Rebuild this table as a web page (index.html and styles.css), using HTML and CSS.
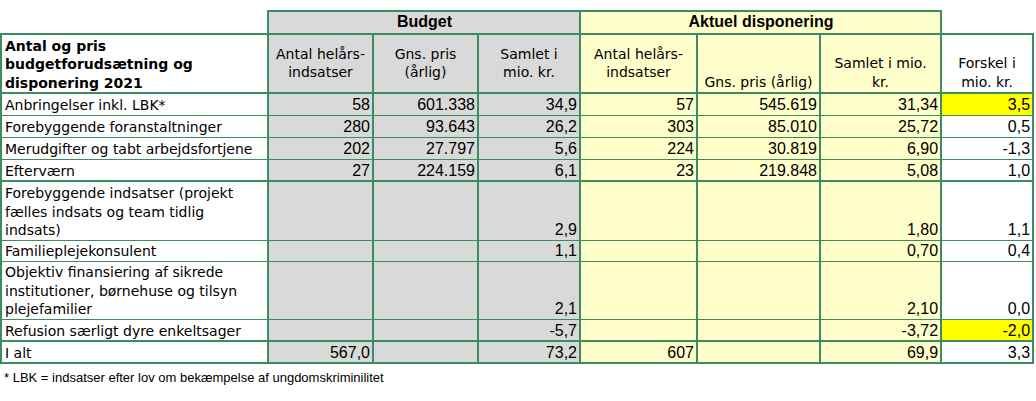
FILE: index.html
```html
<!DOCTYPE html>
<html lang="da">
<head>
<meta charset="utf-8">
<title>Antal og pris budgetforudsætning og disponering 2021</title>
<link rel="stylesheet" href="styles.css">
</head>
<body>
<table class="sheet">
  <colgroup>
    <col class="w-label">
    <col class="w-b1"><col class="w-b2"><col class="w-b3">
    <col class="w-a1"><col class="w-a2"><col class="w-a3">
    <col class="w-diff">
  </colgroup>
  <thead>
    <tr class="r-group">
      <th class="blank"></th>
      <th colspan="3" class="grp gray">Budget</th>
      <th colspan="3" class="grp yel">Aktuel disponering</th>
      <th class="blank"></th>
    </tr>
    <tr class="r-head">
      <th class="lbl-head">Antal og pris<br>budgetforudsætning og<br>disponering 2021</th>
      <th class="h gray mid">Antal helårs-<br>indsatser</th>
      <th class="h gray mid">Gns. pris<br>(årlig)</th>
      <th class="h gray mid">Samlet i<br>mio. kr.</th>
      <th class="h yel mid">Antal helårs-<br>indsatser</th>
      <th class="h yel">Gns. pris (årlig)</th>
      <th class="h yel">Samlet i mio.<br>kr.</th>
      <th class="h white">Forskel i<br>mio. kr.</th>
    </tr>
  </thead>
  <tbody>
    <tr class="r1">
      <td class="lbl">Anbringelser inkl. LBK*</td>
      <td class="n gray">58</td><td class="n gray">601.338</td><td class="n gray">34,9</td>
      <td class="n yel">57</td><td class="n yel">545.619</td><td class="n yel">31,34</td>
      <td class="n hl">3,5</td>
    </tr>
    <tr class="r1">
      <td class="lbl">Forebyggende foranstaltninger</td>
      <td class="n gray">280</td><td class="n gray">93.643</td><td class="n gray">26,2</td>
      <td class="n yel">303</td><td class="n yel">85.010</td><td class="n yel">25,72</td>
      <td class="n">0,5</td>
    </tr>
    <tr class="r1">
      <td class="lbl one">Merudgifter og tabt arbejdsfortjene</td>
      <td class="n gray">202</td><td class="n gray">27.797</td><td class="n gray">5,6</td>
      <td class="n yel">224</td><td class="n yel">30.819</td><td class="n yel">6,90</td>
      <td class="n">-1,3</td>
    </tr>
    <tr class="r1 thick-bottom">
      <td class="lbl">Efterværn</td>
      <td class="n gray">27</td><td class="n gray">224.159</td><td class="n gray">6,1</td>
      <td class="n yel">23</td><td class="n yel">219.848</td><td class="n yel">5,08</td>
      <td class="n">1,0</td>
    </tr>
    <tr class="r3">
      <td class="lbl">Forebyggende indsatser (projekt<br>fælles indsats og team tidlig<br>indsats)</td>
      <td class="n gray"></td><td class="n gray"></td><td class="n gray">2,9</td>
      <td class="n yel"></td><td class="n yel"></td><td class="n yel">1,80</td>
      <td class="n">1,1</td>
    </tr>
    <tr class="r1s">
      <td class="lbl">Familieplejekonsulent</td>
      <td class="n gray"></td><td class="n gray"></td><td class="n gray">1,1</td>
      <td class="n yel"></td><td class="n yel"></td><td class="n yel">0,70</td>
      <td class="n">0,4</td>
    </tr>
    <tr class="r3s">
      <td class="lbl">Objektiv finansiering af sikrede<br>institutioner, børnehuse og tilsyn<br>plejefamilier</td>
      <td class="n gray"></td><td class="n gray"></td><td class="n gray">2,1</td>
      <td class="n yel"></td><td class="n yel"></td><td class="n yel">2,10</td>
      <td class="n">0,0</td>
    </tr>
    <tr class="r1 thick-bottom">
      <td class="lbl">Refusion særligt dyre enkeltsager</td>
      <td class="n gray"></td><td class="n gray"></td><td class="n gray">-5,7</td>
      <td class="n yel"></td><td class="n yel"></td><td class="n yel">-3,72</td>
      <td class="n hl">-2,0</td>
    </tr>
    <tr class="r1 total">
      <td class="lbl">I alt</td>
      <td class="n gray">567,0</td><td class="n gray"></td><td class="n gray">73,2</td>
      <td class="n yel">607</td><td class="n yel"></td><td class="n yel">69,9</td>
      <td class="n">3,3</td>
    </tr>
  </tbody>
</table>
<p class="note">* LBK = indsatser efter lov om bekæmpelse af ungdomskriminilitet</p>
</body>
</html>
```
FILE: styles.css
```css
html, body {
  background: #ffffff;
}
body {
  margin: 10px 0 0 0;
  color: #000000;
  font-family: "DejaVu Sans", Verdana, sans-serif;
}

.sheet {
  border-collapse: collapse;
  table-layout: fixed;
  width: 1034px;
}

.w-label { width: 267px; }
.w-b1 { width: 105px; }
.w-b2 { width: 105px; }
.w-b3 { width: 102px; }
.w-a1 { width: 117px; }
.w-a2 { width: 123px; }
.w-a3 { width: 121px; }
.w-diff { width: 92px; }

.sheet th,
.sheet td {
  border-left: 2px solid #3b8c5f;
  border-right: 2px solid #3b8c5f;
  border-top: 1px solid #3b8c5f;
  border-bottom: 1px solid #3b8c5f;
  padding: 0 2px 0 3px;
  overflow: hidden;
  vertical-align: bottom;
  line-height: 18.5px;
}

.sheet th.blank {
  border: none;
  background: transparent;
}

.gray { background: #d9d9d9; }
.yel { background: #ffffcc; }
.white { background: #ffffff; }
.hl { background: #ffff00; }

.r-group { height: 23px; }
.r-group .grp {
  border: 2px solid #3b8c5f;
  font-family: "Liberation Sans", Arial, sans-serif;
  font-weight: bold;
  font-size: 16px;
  text-align: center;
  vertical-align: middle;
}

.r-head { height: 59px; }
.r-head th {
  border-top: 2px solid #3b8c5f;
  border-bottom: 2px solid #3b8c5f;
}
.lbl-head {
  font-weight: bold;
  font-size: 14px;
  text-align: left;
  padding-bottom: 1px;
  white-space: nowrap;
}
.r-head .h {
  font-weight: normal;
  font-size: 14px;
  text-align: center;
  padding: 0 1px 1px 1px;
  white-space: nowrap;
}
.r-head .mid {
  vertical-align: middle;
}

.r1 { height: 22px; }
.r1s { height: 21px; }
.r3 { height: 59px; }
.r3s { height: 58px; }

.thick-bottom td {
  border-bottom: 2px solid #3b8c5f;
}
.total td {
  border-bottom: 2px solid #3b8c5f;
}

.lbl {
  font-size: 14px;
  text-align: left;
  padding-bottom: 1px;
  white-space: nowrap;
}
.lbl.one {
  padding-right: 0;
}

.n {
  font-family: "Liberation Sans", Arial, sans-serif;
  font-size: 16px;
  text-align: right;
  padding-bottom: 1px;
}

.note {
  margin: 6px 0 0 4px;
  font-family: "Liberation Sans", Arial, sans-serif;
  font-size: 13px;
  line-height: 15px;
}
```
